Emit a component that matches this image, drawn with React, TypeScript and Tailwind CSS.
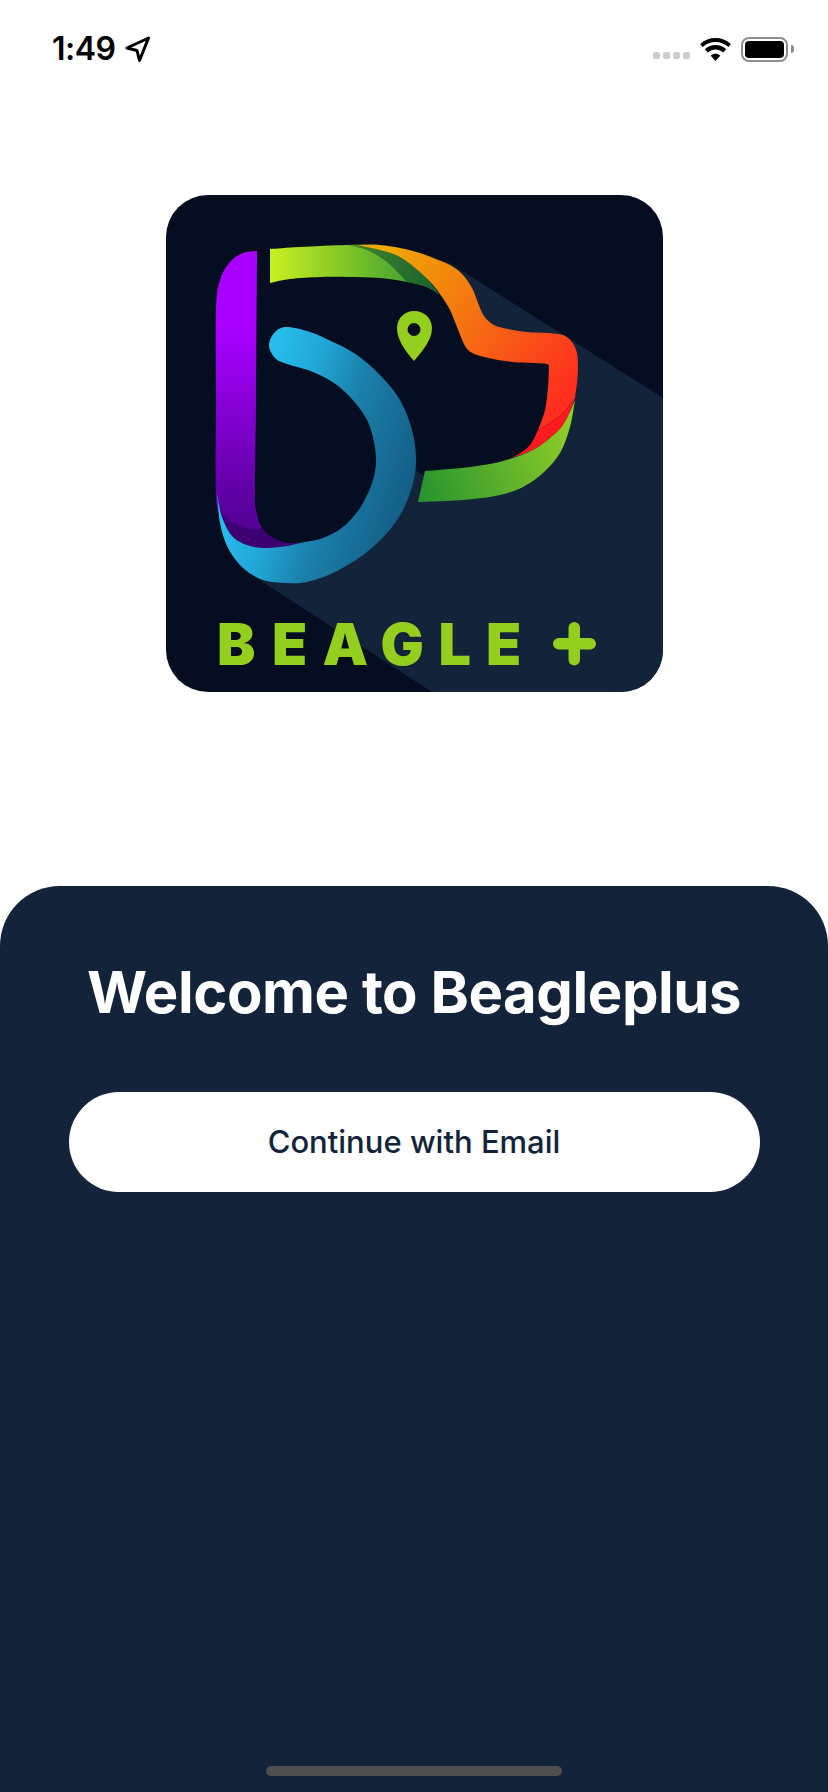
type P = [number, number];

// Smooth closed outline: each run is a Catmull-Rom curve; runs meet at sharp corners.
const outline = (runs: P[][]): string => {
  let d = `M${runs[0][0][0]},${runs[0][0][1]}`;
  for (const r of runs) {
    for (let i = 0; i < r.length - 1; i++) {
      const p0 = r[Math.max(i - 1, 0)];
      const p1 = r[i];
      const p2 = r[i + 1];
      const p3 = r[Math.min(i + 2, r.length - 1)];
      const c1x = p1[0] + (p2[0] - p0[0]) / 6;
      const c1y = p1[1] + (p2[1] - p0[1]) / 6;
      const c2x = p2[0] - (p3[0] - p1[0]) / 6;
      const c2y = p2[1] - (p3[1] - p1[1]) / 6;
      d += ` C${c1x.toFixed(1)},${c1y.toFixed(1)} ${c2x.toFixed(1)},${c2y.toFixed(1)} ${p2[0]},${p2[1]}`;
    }
  }
  return d + " Z";
};

const shadow = "M448,262 L663,398 L663,692 L432,692 L258,579 L350,530 L412,468 L424,476 L450,485 L500,480 L560,440 L572,400 L570,350 L490,325 L465,300 Z";

const greenTop = outline([
  [[270, 249], [300, 247], [347, 245], [380, 245]],
  [[380, 245], [440, 295]],
  [[440, 295], [427, 287], [407, 282], [380, 278], [347, 277], [320, 277], [290, 279], [270, 283]],
]);

const greenDark = outline([
  [[347, 245], [367, 250], [387, 262], [407, 282]],
  [[407, 282], [427, 287], [440, 295]],
  [[440, 295], [420, 270], [400, 255], [380, 247], [347, 245]],
]);

const orange = outline([
  [[357, 245], [380, 245], [400, 248], [420, 253], [436, 259], [450, 265], [462, 274], [472, 288], [478, 303], [484, 316], [494, 325], [508, 329], [527, 332], [547, 333], [563, 335], [572, 342], [577, 353], [578, 367], [577, 383], [575, 398]],
  [[575, 398], [563, 413], [550, 423], [538, 430]],
  [[538, 430], [545, 410], [548, 387], [549, 366]],
  [[549, 366], [548, 364]],
  [[548, 364], [533, 363], [513, 362], [493, 359], [477, 355], [468, 350], [463, 342], [457, 327], [450, 310], [442, 297], [433, 285], [420, 272], [400, 257], [380, 250], [357, 245]],
]);

const red = outline([
  [[575, 398], [563, 413], [550, 423], [538, 430]],
  [[538, 430], [530, 445], [517, 455], [503, 460]],
  [[503, 460], [533, 450], [557, 432], [567, 418], [575, 398]],
]);

const greenBottom = outline([
  [[425, 471], [450, 469], [477, 466], [503, 461], [533, 450], [557, 432], [567, 418], [575, 400]],
  [[575, 400], [570, 427], [560, 453], [543, 473], [523, 487], [500, 495], [473, 499], [447, 501], [418, 502]],
]);

const purple = outline([
  [[257, 251], [243, 253], [230, 262], [220, 280], [216, 310], [216, 400], [216, 497], [222, 517], [233, 537], [250, 546], [267, 548], [287, 546], [300, 543]],
  [[300, 543], [287, 543], [273, 538], [262, 528], [256, 510], [255, 490], [256, 400], [257, 251]],
]);

const purpleDark = outline([
  [[217, 497], [223, 515], [237, 525], [255, 529], [262, 528]],
  [[262, 528], [273, 538], [287, 543], [300, 543]],
  [[300, 543], [287, 546], [267, 548], [250, 546], [233, 537], [222, 517], [217, 497]],
]);

const blue = outline([
  [[217, 493], [222, 517], [233, 537], [250, 546], [267, 548], [287, 546], [300, 543], [323, 538], [343, 527], [360, 508], [372, 483], [376, 458], [370, 427], [357, 405], [337, 385], [313, 372], [287, 364], [275, 358], [269, 345], [275, 332], [287, 327], [310, 332], [333, 342], [357, 355], [380, 375], [400, 400], [412, 430], [416, 458], [413, 483], [403, 510], [387, 533], [363, 555], [333, 573], [307, 582], [287, 583], [263, 580], [243, 568], [228, 548], [220, 523], [217, 493]],
]);

const Logo = () => (
  <svg viewBox="166 195 497 497" className="block w-[497px] h-[497px] rounded-[42px]">
    <defs>
      <linearGradient id="pur" gradientUnits="userSpaceOnUse" x1="236" y1="330" x2="236" y2="520">
        <stop offset="0" stopColor="#a800ff" />
        <stop offset="1" stopColor="#540096" />
      </linearGradient>
      <linearGradient id="blu" gradientUnits="userSpaceOnUse" x1="280" y1="340" x2="439" y2="388">
        <stop offset="0" stopColor="#26bcec" />
        <stop offset="0.25" stopColor="#23a6d8" />
        <stop offset="0.55" stopColor="#1a80a9" />
        <stop offset="1" stopColor="#145f88" />
      </linearGradient>
      <linearGradient id="grn" gradientUnits="userSpaceOnUse" x1="270" y1="265" x2="420" y2="265">
        <stop offset="0" stopColor="#c8f020" />
        <stop offset="1" stopColor="#3a9c30" />
      </linearGradient>
      <linearGradient id="dgr" gradientUnits="userSpaceOnUse" x1="350" y1="250" x2="440" y2="290">
        <stop offset="0" stopColor="#44802e" />
        <stop offset="1" stopColor="#14622c" />
      </linearGradient>
      <linearGradient id="org" gradientUnits="userSpaceOnUse" x1="385" y1="245" x2="575" y2="385">
        <stop offset="0" stopColor="#efaa02" />
        <stop offset="0.45" stopColor="#f47412" />
        <stop offset="1" stopColor="#ff2e1e" />
      </linearGradient>
      <linearGradient id="gr2" gradientUnits="userSpaceOnUse" x1="425" y1="490" x2="575" y2="430">
        <stop offset="0" stopColor="#2b962f" />
        <stop offset="1" stopColor="#92ce27" />
      </linearGradient>
    </defs>
    <rect x="166" y="195" width="497" height="497" fill="#040e20" />
    <path d={shadow} fill="#13233a" />
    <path d={greenTop} fill="url(#grn)" />
    <path d={greenDark} fill="url(#dgr)" />
    <path d={orange} fill="url(#org)" />
    <path d={red} fill="#ff1a1f" />
    <path d={greenBottom} fill="url(#gr2)" />
    <path d={purple} fill="url(#pur)" />
    <path d={purpleDark} fill="#3d0070" />
    <path d={blue} fill="url(#blu)" />
    <path d="M414,361 C405,350 397,340 397,328 C397,318 405,311 414,311 C424,311 432,318 432,328 C432,340 423,350 414,361 Z M414,323 A6.5,6.5 0 1 0 414,336 A6.5,6.5 0 1 0 414,323 Z" fill="#94cf20" fillRule="evenodd" />
    <text y="665" x="217 272 322.5 380.5 438.5 486" fill="#94cf20" style={{ fontFamily: "Inter, sans-serif", fontWeight: 900, fontSize: 57.5 }}>BEAGLE</text>
    <rect x="553" y="638" width="43" height="11.5" rx="5.75" fill="#94cf20" />
    <rect x="568.5" y="622" width="11.5" height="43.5" rx="5.75" fill="#94cf20" />
  </svg>
);

export default function App() {
  return (
    <div className="w-[828px] h-[1792px] bg-white flex flex-col overflow-hidden font-['Inter',sans-serif]">
      <div className="h-[195px] shrink-0 pt-[31px] pl-[52px] pr-[34px]">
        <div className="h-[36px] flex items-center">
          <span className="text-[32px] leading-[36px] font-semibold text-black tracking-[-0.5px]">1:49</span>
          <svg width="26" height="26" viewBox="0 0 26 26" className="ml-[9px]">
            <path d="M23.5 2 L2 12 L12 14.5 L14.5 24.5 Z" fill="none" stroke="#000" strokeWidth="3" strokeLinejoin="round" />
          </svg>
          <div className="flex-1" />
          <div className="flex gap-[3px] mt-[12px] mr-[10px]">
            <div className="w-[7px] h-[7px] rounded-[2px] bg-[#cccccc]" />
            <div className="w-[7px] h-[7px] rounded-[2px] bg-[#cccccc]" />
            <div className="w-[7px] h-[7px] rounded-[2px] bg-[#cccccc]" />
            <div className="w-[7px] h-[7px] rounded-[2px] bg-[#cccccc]" />
          </div>
          <svg width="31" height="23" viewBox="0 0 32 24" className="mr-[10px]">
            <path d="M16 24 L11 18.5 C14 15.8 18 15.8 21 18.5 Z M8 15.2 L4.8 11.7 C11.5 6 20.5 6 27.2 11.7 L24 15.2 C19 11 13 11 8 15.2 Z M2.6 9.3 L0 6.2 C9 -2 23 -2 32 6.2 L29.4 9.3 C21.5 2.6 10.5 2.6 2.6 9.3 Z" fill="#000" />
          </svg>
          <div className="w-[47px] h-[25px] rounded-[8px] border-2 border-[#8e8e8e] p-[2px]">
            <div className="w-full h-full rounded-[4px] bg-black" />
          </div>
          <div className="w-[3px] h-[8px] ml-[3px] rounded-r-[3px] bg-[#8e8e8e]" />
        </div>
      </div>
      <div className="h-[497px] shrink-0 flex justify-center">
        <Logo />
      </div>
      <div className="flex-1 mt-[194px] bg-[#13233a] rounded-t-[60px] flex flex-col items-center relative">
        <h1 className="mt-[72px] text-[58px] leading-[68px] font-bold text-white tracking-[-0.45px] whitespace-nowrap">Welcome to Beagleplus</h1>
        <button className="mt-[66px] w-[691px] h-[100px] rounded-[50px] bg-white text-[#13233a] text-[31px] font-medium">Continue with Email</button>
        <div className="absolute bottom-[16px] left-[266px] w-[296px] h-[10px] rounded-full bg-[#4f4f4f]" />
      </div>
    </div>
  );
}
